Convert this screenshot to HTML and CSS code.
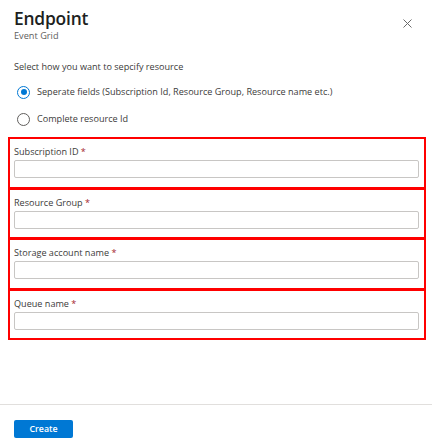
FILE: index.html
```html
<!DOCTYPE html>
<html>
<head>
<meta charset="utf-8">
<link rel="stylesheet" href="styles.css">
</head>
<body>
<div class="panel">
  <div class="header">
    <div class="titles">
      <h1 class="title">Endpoint</h1>
      <div class="subtitle">Event Grid</div>
    </div>
    <button class="close" aria-label="Close">
      <svg width="9" height="9" viewBox="0 0 9 9"><path d="M0.5 0.5L8.5 8.5M8.5 0.5L0.5 8.5" stroke="#6a6a6a" stroke-width="1"/></svg>
    </button>
  </div>
  <div class="body">
    <div class="question">Select how you want to sepcify resource</div>
    <div class="radios">
      <label class="radio"><span class="dot checked"></span>Seperate fields (Subscription Id, Resource Group, Resource name etc.)</label>
      <label class="radio"><span class="dot"></span>Complete resource Id</label>
    </div>
    <div class="fields">
      <div class="field"><div class="label">Subscription ID <span class="req">*</span></div><div class="input"></div></div>
      <div class="field"><div class="label">Resource Group <span class="req">*</span></div><div class="input"></div></div>
      <div class="field"><div class="label">Storage account name <span class="req">*</span></div><div class="input"></div></div>
      <div class="field"><div class="label">Queue name <span class="req">*</span></div><div class="input"></div></div>
    </div>
  </div>
  <div class="footer">
    <button class="create">Create</button>
  </div>
</div>
</body>
</html>
```
FILE: styles.css
```css
html, body { margin: 0; padding: 0; background: #fff; }
body { font-family: "Open Sans", "Noto Sans", sans-serif; color: #3b3a39; width: 432px; height: 441px; overflow: hidden; }
.panel { display: flex; flex-direction: column; height: 441px; }
.header { display: flex; justify-content: space-between; align-items: flex-start; padding: 6px 20px 0 14px; }
.title { margin: 0; font-size: 17.4px; font-weight: 600; line-height: 24px; color: #201f1e; letter-spacing: -0.2px; }
.subtitle { font-size: 9.2px; line-height: 12px; color: #605e5c; margin-top: 0; }
.close { border: 0; background: none; padding: 0; margin-top: 13px; width: 9px; height: 9px; display: flex; }
.body { padding: 0 6px 0 8px; }
.question { font-size: 9.1px; line-height: 12px; margin: 19px 0 0 6px; }
.radios { display: flex; flex-direction: column; gap: 13px; margin: 12px 0 0 9px; }
.radio { display: flex; align-items: center; gap: 7px; font-size: 9.1px; line-height: 14px; }
.dot { width: 13px; height: 13px; border: 1px solid #605e5c; border-radius: 50%; box-sizing: border-box; position: relative; flex: none; }
.dot.checked { border-color: #0078d4; }
.dot.checked::after { content: ""; position: absolute; left: 2.5px; top: 2.5px; width: 6px; height: 6px; border-radius: 50%; background: #0078d4; }
.fields { display: flex; flex-direction: column; margin-top: 11px; }
.field { border: 2px solid #f00; height: 51.5px; box-sizing: border-box; padding: 7px 5px 0 4px; margin-top: -1px; }
.field:first-child { margin-top: 0; }
.label { font-size: 9.1px; line-height: 12px; }
.req { color: #a4262c; }
.input { height: 18px; margin-top: 2px; border: 1px solid #c8c6c4; border-radius: 2px; box-sizing: border-box; }
.footer { margin-top: auto; border-top: 1px solid #e1dfdd; padding: 15px 14px 3px; }
.create { background: #0078d4; color: #fff; border: 0; border-radius: 2px; font-family: "Open Sans", sans-serif; font-size: 8.8px; font-weight: 600; width: 59px; height: 18px; padding: 0; display: block; }
```
